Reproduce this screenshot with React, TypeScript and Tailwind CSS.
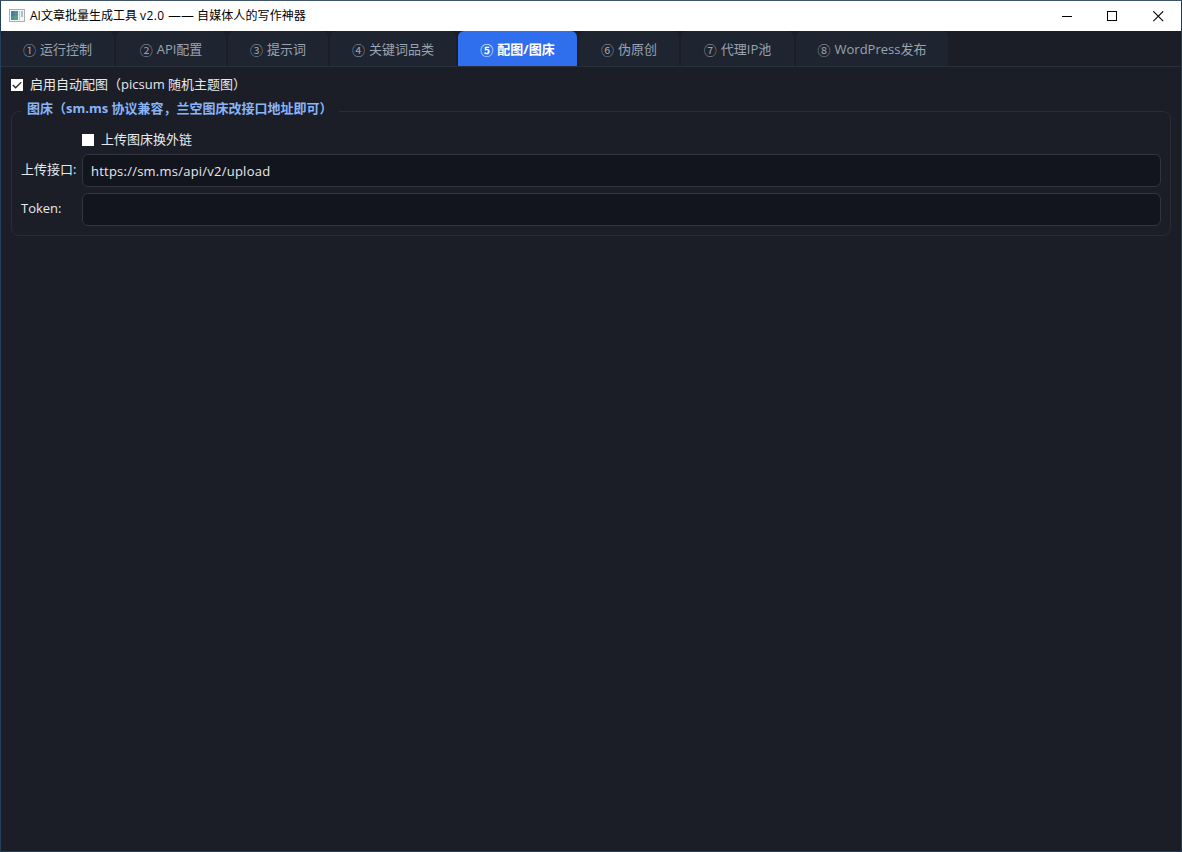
interface TabItem {
  num: string
  label: string
  width: string
  active?: boolean
}

const tabs: TabItem[] = [
  { num: '①', label: '运行控制', width: 'w-[113px]' },
  { num: '②', label: 'API配置', width: 'w-[110px]' },
  { num: '③', label: '提示词', width: 'w-[100px]' },
  { num: '④', label: '关键词品类', width: 'w-[126px]' },
  { num: '⑤', label: '配图/图床', width: 'w-[119px]', active: true },
  { num: '⑥', label: '伪原创', width: 'w-[100px]' },
  { num: '⑦', label: '代理IP池', width: 'w-[113px]' },
  { num: '⑧', label: 'WordPress发布', width: 'w-[152px]' },
]

function TitleBar() {
  return (
    <header className="flex h-[30px] shrink-0 items-center bg-white pl-2 text-black">
      <svg width="16" height="13" viewBox="0 0 16 13" className="mr-[5px] mb-[2px] shrink-0">
        <rect x="0.5" y="0.5" width="15" height="12" fill="#f2f4f5" stroke="#a9b0b5" />
        <rect x="2" y="2" width="7" height="9" fill="#4f8f96" />
        <rect x="2" y="2" width="3" height="5" fill="#477ca8" />
        <rect x="5" y="7" width="4" height="4" fill="#58a083" />
        <rect x="10" y="2" width="1" height="9" fill="#c2c9cd" />
        <rect x="12" y="2" width="2" height="6" fill="#b5bec4" />
      </svg>
      <h1 className="flex text-[12px] leading-[30px] whitespace-pre">
        <span>AI文章批量生成工具 </span>
        <span className="tracking-[0.4px]">v2.0 </span>
        <span className="w-[29px] font-['DejaVu_Sans',sans-serif] text-[13px]">——</span>
        <span className="tracking-[0.1px]">自媒体人的写作神器</span>
      </h1>
      <div className="ml-auto flex h-full items-center gap-[35px] pr-[17px]">
        <svg width="10" height="11" viewBox="0 0 10 11" shapeRendering="crispEdges">
          <path d="M0 5.5H10" stroke="currentColor" />
        </svg>
        <svg width="11" height="11" viewBox="0 0 11 11" shapeRendering="crispEdges">
          <rect x="0.5" y="0.5" width="9" height="9" fill="none" stroke="currentColor" />
        </svg>
        <svg width="11" height="11" viewBox="0 0 11 11">
          <path d="M0.3 0.3L10.2 10.2M10.2 0.3L0.3 10.2" stroke="currentColor" strokeWidth="1.1" />
        </svg>
      </div>
    </header>
  )
}

function TabBar() {
  return (
    <nav className="flex h-9 shrink-0 gap-[2px] border-b border-[#2a303b] text-[13px]">
      {tabs.map((tab) => (
        <button
          key={tab.num}
          className={`flex h-[35px] shrink-0 items-center justify-center gap-1 rounded-t-md pt-[2px] whitespace-nowrap ${tab.width} ${
            tab.active ? 'bg-[#2f6fed] font-bold text-white' : 'bg-[#1e2530] text-[#9aa3b2]'
          }`}
        >
          <span className="w-[13px] font-['Noto_Sans_CJK_SC',sans-serif]">{tab.num}</span>
          <span>{tab.label}</span>
        </button>
      ))}
    </nav>
  )
}

function CheckBox({ label, checked }: { label: string; checked?: boolean }) {
  return (
    <label className="flex h-[18px] items-center gap-[7px] whitespace-nowrap">
      <span className="flex size-3 shrink-0 items-center justify-center bg-white">
        {checked && (
          <svg width="12" height="12" viewBox="0 0 12 12">
            <path d="M1.8 6L4.6 8.8L10.3 3.1" fill="none" stroke="#222" strokeWidth="1.3" />
          </svg>
        )}
      </span>
      <span>{label}</span>
    </label>
  )
}

function Field({ label, value }: { label: string; value: string }) {
  return (
    <div className="flex h-[33px]">
      <span className="w-[61px] shrink-0 leading-[31px] whitespace-nowrap">{label}</span>
      <div className="flex-1 rounded-md border border-[#303540] bg-[#12151d] px-2 leading-[32px] tracking-[0.23px]">
        {value}
      </div>
    </div>
  )
}

export default function App() {
  return (
    <div className="flex h-[852px] w-[1182px] flex-col overflow-hidden border border-t-[#40566b] border-r-[#203b52] border-b-[#203b5c] border-l-[#23405a] bg-[#1b1e27] font-['Open_Sans','Noto_Sans_CJK_SC',sans-serif] text-[13px] text-[#e6e8ec]">
      <TitleBar />
      <TabBar />
      <main className="px-[10px] pt-[9px]">
        <CheckBox label="启用自动配图（picsum 随机主题图）" checked />
        <section className="relative mt-[17px] h-[125px] rounded-lg border border-[#282d37] pt-[19px] pr-[9px] pl-[9px]">
          <h2 className="absolute -top-[13px] left-[9px] bg-[#1b1e27] px-[6px] leading-[18px] font-bold whitespace-nowrap text-[#8ab4f8]">
            图床（sm.ms 协议兼容，兰空图床改接口地址即可）
          </h2>
          <div className="mb-[5px] pl-[61px]">
            <CheckBox label="上传图床换外链" />
          </div>
          <div className="flex flex-col gap-[6px]">
            <Field label="上传接口:" value="https://sm.ms/api/v2/upload" />
            <Field label="Token:" value="" />
          </div>
        </section>
      </main>
    </div>
  )
}
